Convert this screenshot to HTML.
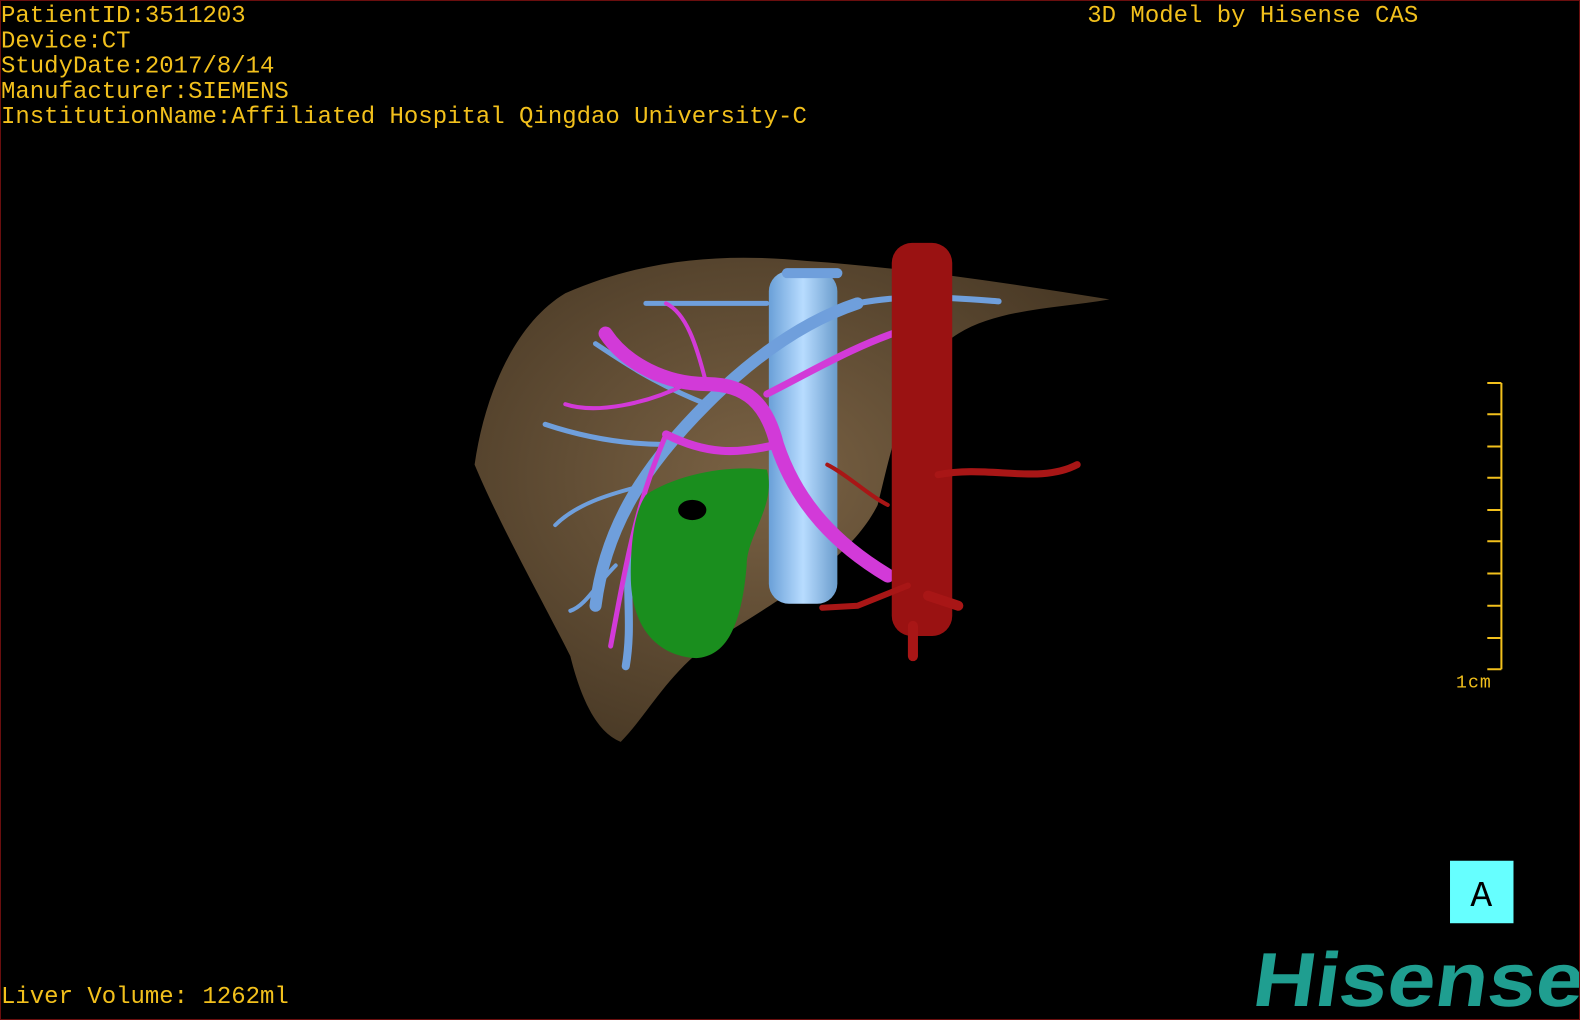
<!DOCTYPE html>
<html><head><meta charset="utf-8"><style>
html,body{margin:0;padding:0;background:#000;overflow:hidden;}
#w{width:1580px;height:1020px;overflow:hidden;background:#000;}
#s{position:relative;width:1568px;height:1012px;background:#000;overflow:hidden;box-sizing:border-box;border:1px solid #6a0e0e;transform:scale(1.00765,1.0079);transform-origin:0 0;}
.t{position:absolute;color:#f2c01c;font-family:"Liberation Mono",monospace;font-size:23.8px;line-height:25px;white-space:pre;}
svg{position:absolute;left:0;top:0;}
</style></head><body><div id="w"><div id="s">
<svg width="1568" height="1012" viewBox="0 0 1568 1012">
<defs>
<radialGradient id="lv" cx="0.45" cy="0.45" r="0.6"><stop offset="0" stop-color="#7a6244"/><stop offset="1" stop-color="#4a3a26"/></radialGradient>
<linearGradient id="ivc" x1="0" x2="1"><stop offset="0" stop-color="#6aa0d8"/><stop offset="0.5" stop-color="#b8dcff"/><stop offset="1" stop-color="#6a9ccc"/></linearGradient>
</defs>
<path d="M560 290 C640 255 720 250 800 258 C900 265 1000 280 1100 296 C1050 305 990 305 950 330 C900 360 885 440 870 500 C840 560 760 600 700 640 C660 670 640 710 615 735 C590 725 575 690 565 650 C540 600 495 520 470 460 C480 390 510 320 560 290Z" fill="url(#lv)"/>
<rect x="762" y="268" width="68" height="330" rx="20" fill="url(#ivc)"/>
<g stroke="#6f9fdc" stroke-linecap="round" fill="none">
<path d="M590 600 C600 520 640 460 700 400 C740 360 790 320 850 300" stroke-width="12"/>
<path d="M620 660 C630 600 610 560 640 510" stroke-width="8"/>
<path d="M700 400 C650 380 620 360 590 340" stroke-width="5"/>
<path d="M660 440 C610 440 570 430 540 420" stroke-width="5"/>
<path d="M640 480 C600 490 570 500 550 520" stroke-width="4"/>
<path d="M850 300 C900 290 950 295 990 298" stroke-width="6"/>
<path d="M760 300 C720 300 680 300 640 300" stroke-width="5"/>
<path d="M610 560 C590 580 580 600 565 605" stroke-width="4"/>
<path d="M780 270 L830 270" stroke-width="10"/>
</g>
<g stroke="#d23ad8" stroke-linecap="round" fill="none">
<path d="M880 570 C830 540 790 500 770 440 C760 400 740 380 700 380 C660 380 620 360 600 330" stroke-width="14"/>
<path d="M770 440 C730 450 700 450 660 430" stroke-width="8"/>
<path d="M760 390 C800 370 850 340 900 325" stroke-width="7"/>
<path d="M660 430 C630 500 620 560 605 640" stroke-width="5"/>
<path d="M680 380 C640 400 590 410 560 400" stroke-width="4"/>
<path d="M700 380 C690 340 680 310 660 300" stroke-width="4"/>
</g>
<path d="M640 490 C670 470 720 460 760 465 C770 500 740 530 740 560 C735 620 720 650 690 652 C650 650 625 620 625 570 C625 530 630 505 640 490Z" fill="#1a8e1e"/>
<ellipse cx="686" cy="505" rx="14" ry="10" fill="#000"/>
<rect x="884" y="240" width="60" height="390" rx="20" fill="#9a1212"/>
<g stroke="#a81616" stroke-linecap="round" fill="none">
<path d="M930 470 C980 460 1030 480 1068 460" stroke-width="7"/>
<path d="M905 620 L905 650" stroke-width="10"/>
<path d="M900 580 L850 600 L815 602" stroke-width="6"/>
<path d="M920 590 L950 600" stroke-width="10"/>
<path d="M820 460 C840 470 860 490 880 500" stroke-width="4"/>
</g>
<rect x="1438" y="853" width="63" height="62" fill="#66ffff"/>
<text x="1469" y="898" text-anchor="middle" font-family="Liberation Mono,monospace" font-size="36" fill="#000">A</text>
<g stroke="#f2c01c" stroke-width="2" fill="none">
<path d="M1489 379 V663"/>
<path d="M1475 379H1489M1475 410H1489M1475 442H1489M1475 473H1489M1475 505H1489M1475 536H1489M1475 568H1489M1475 600H1489M1475 632H1489M1475 663H1489"/>
</g>
<g transform="translate(1240 997) skewX(-8)">
<text x="0" y="0" font-family="Liberation Sans,sans-serif" font-weight="bold" font-size="76" fill="#1f9e90" textLength="328" lengthAdjust="spacingAndGlyphs">Hisense</text>
</g>
</svg>
<div class="t" style="left:0;top:3px">PatientID:3511203
Device:CT
StudyDate:2017/8/14
Manufacturer:SIEMENS
InstitutionName:Affiliated Hospital Qingdao University-C</div>
<div class="t" style="left:1078px;top:3px">3D Model by Hisense CAS</div>
<div class="t" style="left:0;top:976px">Liver Volume: 1262ml</div>
<div class="t" style="left:1444px;top:665px;font-size:18px;letter-spacing:1px">1cm</div>
</div></div></body></html>
